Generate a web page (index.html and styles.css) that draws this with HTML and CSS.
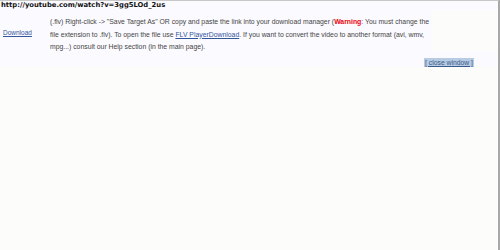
FILE: index.html
```html
<!DOCTYPE html>
<html lang="en">
<head>
    <meta charset="UTF-8">
    <title>Download</title>
    <link rel="stylesheet" href="styles.css">
</head>
<body>
    <div class="window">
        <div class="video-url">http://youtube.com/watch?v=3gg5LOd_2us</div>
        <table class="links">
            <tr>
                <td class="link-cell"><a href="#">Download</a></td>
                <td class="info-cell">
                    (.flv) Right-click -&gt; "Save Target As" OR copy and paste the link into your download manager (<span class="warning">Warning</span>: You must change the file extension to .flv). To open the file use <a href="#">FLV PlayerDownload</a>. If you want to convert the video to another format (avi, wmv, mpg...) consult our Help section (in the main page).
                </td>
            </tr>
        </table>
        <div class="actions">
            <a href="#" class="close-button">[ close window ]</a>
        </div>
    </div>
</body>
</html>
```

FILE: styles.css
```css
* {
    margin: 0;
    padding: 0;
    box-sizing: border-box;
}

body {
    background-color: #fcfdfb;
    font-family: "Liberation Sans", Arial, sans-serif;
    color: #444;
}

.window {
    height: 250px;
    border-top: 1px solid #c8c8c8;
    border-right: 2px solid #a8a8a8;
}

.video-url {
    font-family: "DejaVu Sans", Verdana, sans-serif;
    font-weight: bold;
    font-size: 6.8px;
    line-height: 9px;
    color: #111;
    padding-left: 1px;
    background-color: #fbfaff;
}

.links {
    border-collapse: collapse;
    width: 432px;
    background-color: #fbfaff;
}

.link-cell {
    width: 49px;
    padding: 2px 0 0 3px;
    vertical-align: middle;
    font-size: 6.5px;
}

.info-cell {
    padding: 6px 0 0 1px;
    font-size: 6.85px;
    line-height: 12.5px;
}

a {
    color: #33559a;
}

.warning {
    color: #e8000c;
    font-weight: bold;
}

.actions {
    text-align: right;
    margin-top: -3px;
    padding: 0 24px 0 0;
    height: 16px;
    background-color: #fbfaff;
}

.close-button {
    display: inline-block;
    background-color: #b7cbe2;
    color: #3a5a8c;
    font-size: 6.8px;
    line-height: 9px;
    padding: 0 1px;
    white-space: nowrap;
}
```
